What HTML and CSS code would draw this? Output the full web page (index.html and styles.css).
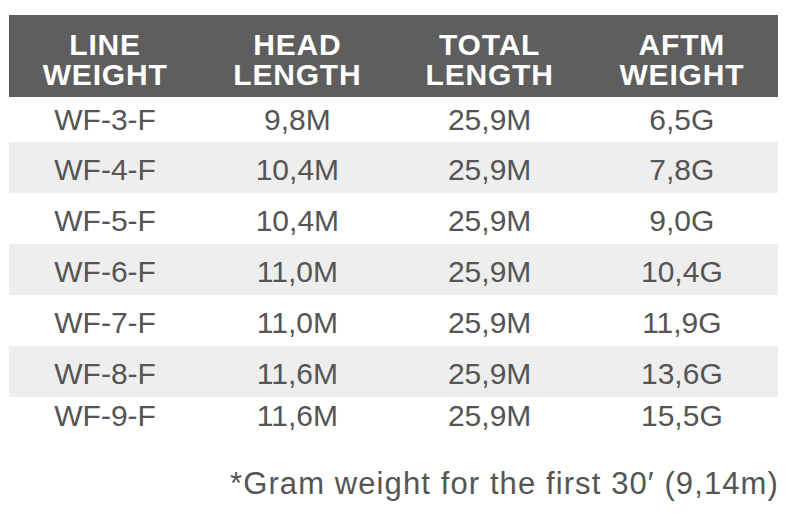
FILE: index.html
```html
<!DOCTYPE html>
<html>
<head>
<meta charset="utf-8">
<link rel="stylesheet" href="styles.css">
</head>
<body>
<div class="page">
  <div class="table">
    <div class="row head">
      <div class="cell">LINE<br>WEIGHT</div>
      <div class="cell">HEAD<br>LENGTH</div>
      <div class="cell">TOTAL<br>LENGTH</div>
      <div class="cell">AFTM<br>WEIGHT</div>
    </div>
    <div class="row first"><div class="cell">WF-3-F</div><div class="cell">9,8M</div><div class="cell">25,9M</div><div class="cell">6,5G</div></div>
    <div class="row alt"><div class="cell">WF-4-F</div><div class="cell">10,4M</div><div class="cell">25,9M</div><div class="cell">7,8G</div></div>
    <div class="row"><div class="cell">WF-5-F</div><div class="cell">10,4M</div><div class="cell">25,9M</div><div class="cell">9,0G</div></div>
    <div class="row alt"><div class="cell">WF-6-F</div><div class="cell">11,0M</div><div class="cell">25,9M</div><div class="cell">10,4G</div></div>
    <div class="row"><div class="cell">WF-7-F</div><div class="cell">11,0M</div><div class="cell">25,9M</div><div class="cell">11,9G</div></div>
    <div class="row alt"><div class="cell">WF-8-F</div><div class="cell">11,6M</div><div class="cell">25,9M</div><div class="cell">13,6G</div></div>
    <div class="row last"><div class="cell">WF-9-F</div><div class="cell">11,6M</div><div class="cell">25,9M</div><div class="cell">15,5G</div></div>
  </div>
  <p class="note">*Gram weight for the first 30′ (9,14m)</p>
</div>
</body>
</html>
```
FILE: styles.css
```css
html, body {
  margin: 0;
  padding: 0;
  background: #ffffff;
}
.page {
  width: 800px;
  height: 527px;
  overflow: hidden;
  padding-top: 15px;
  box-sizing: border-box;
  font-family: "Liberation Sans", Arial, sans-serif;
}
.table {
  margin-left: 9px;
  width: 769px;
}
.row {
  display: grid;
  grid-template-columns: repeat(4, 1fr);
  height: 51px;
  line-height: 51px;
  font-size: 30px;
  color: #555555;
  text-align: center;
}
.row .cell {
  padding-top: 2px;
}
.row.first {
  height: 45px;
  line-height: 45px;
}
.row.first .cell {
  padding-top: 0;
}
.row.last {
  height: 38px;
  line-height: 38px;
}
.row.last .cell {
  padding-top: 0;
}
.row.alt {
  background: #eeeeee;
}
.row.head {
  height: 82px;
  background: #5e5e5e;
  color: #ffffff;
  font-weight: bold;
  font-size: 30px;
  line-height: 30px;
  letter-spacing: 0.8px;
  box-sizing: border-box;
  padding-top: 15px;
}
.row.head .cell {
  padding-top: 0;
}
.note {
  margin: 30px 0 0 0;
  padding-left: 230px;
  font-size: 31px;
  line-height: 38px;
  letter-spacing: 1.1px;
  white-space: nowrap;
  color: #555555;
}
```
